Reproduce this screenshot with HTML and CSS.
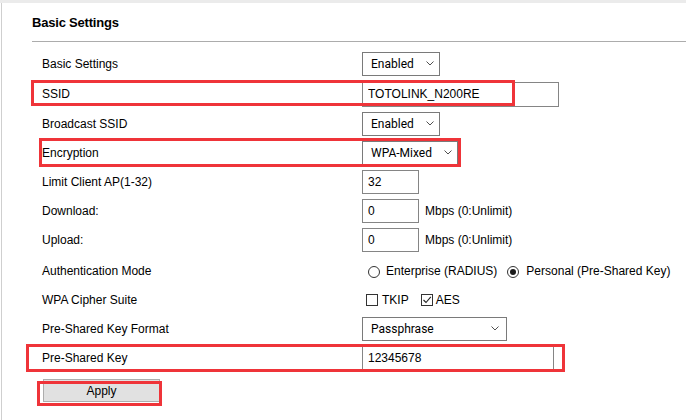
FILE: index.html
```html
<!DOCTYPE html>
<html>
<head>
<meta charset="utf-8">
<title>Basic Settings</title>
<link rel="stylesheet" href="styles.css">
</head>
<body>
<div class="page">
  <div class="topbar"></div>
  <div class="panel">
    <div class="title">Basic Settings</div>
    <div class="form">
      <div class="label">Basic Settings</div>
      <div class="field">
        <div class="select w-enabled"><span>Enabled</span><svg class="chev" width="8" height="5" viewBox="0 0 8 5"><polyline points="0.5,0.5 4,4 7.5,0.5"/></svg></div>
      </div>

      <div class="label">SSID</div>
      <div class="field"><input class="text w-ssid" type="text" value="TOTOLINK_N200RE" readonly></div>

      <div class="label">Broadcast SSID</div>
      <div class="field">
        <div class="select w-enabled"><span>Enabled</span><svg class="chev" width="8" height="5" viewBox="0 0 8 5"><polyline points="0.5,0.5 4,4 7.5,0.5"/></svg></div>
      </div>

      <div class="label">Encryption</div>
      <div class="field">
        <div class="select w-enc"><span>WPA-Mixed</span><svg class="chev" width="8" height="5" viewBox="0 0 8 5"><polyline points="0.5,0.5 4,4 7.5,0.5"/></svg></div>
      </div>

      <div class="label">Limit Client AP(1-32)</div>
      <div class="field"><input class="text w-small" type="text" value="32" readonly></div>

      <div class="label">Download:</div>
      <div class="field"><input class="text w-small" type="text" value="0" readonly><span class="unit">Mbps (0:Unlimit)</span></div>

      <div class="label">Upload:</div>
      <div class="field"><input class="text w-small" type="text" value="0" readonly><span class="unit">Mbps (0:Unlimit)</span></div>

      <div class="label">Authentication Mode</div>
      <div class="field">
        <span class="radio"></span><span class="opt">Enterprise (RADIUS)</span>
        <span class="radio on"></span><span class="opt">Personal (Pre-Shared Key)</span>
      </div>

      <div class="label">WPA Cipher Suite</div>
      <div class="field">
        <span class="check"></span><span class="copt">TKIP</span>
        <span class="check on"><svg width="10" height="10" viewBox="0 0 10 10"><polyline points="1.5,5 4,7.5 8.8,1.8"/></svg></span><span class="copt">AES</span>
      </div>

      <div class="label">Pre-Shared Key Format</div>
      <div class="field">
        <div class="select w-fmt"><span>Passphrase</span><svg class="chev" width="8" height="5" viewBox="0 0 8 5"><polyline points="0.5,0.5 4,4 7.5,0.5"/></svg></div>
      </div>

      <div class="label">Pre-Shared Key</div>
      <div class="field"><input class="text w-psk" type="text" value="12345678" readonly></div>
    </div>
    <div class="actions"><button class="btn" type="button">Apply</button></div>
  </div>

  <div class="mark mark-ssid"></div>
  <div class="mark mark-enc"></div>
  <div class="mark mark-psk"></div>
  <div class="mark mark-apply"></div>
</div>
</body>
</html>
```

FILE: styles.css
```css
html, body {
  margin: 0;
  padding: 0;
  background: #ffffff;
}

body {
  font-family: "Liberation Sans", Arial, sans-serif;
  font-size: 12px;
  color: #000;
}

.page {
  position: relative;
  width: 686px;
  height: 420px;
  overflow: hidden;
}

.topbar {
  height: 3px;
  background: #ebebeb;
}

.panel {
  margin-left: 1px;
  border-left: 1px solid #cfcfcf;
  padding-left: 30px;
  height: 417px;
  box-sizing: border-box;
}

.title {
  padding: 12px 0 10px;
  line-height: 16px;
  font-size: 13px;
  font-weight: bold;
  letter-spacing: -0.2px;
  border-bottom: 1px solid #acacac;
}

.form {
  margin-top: 6px;
  padding-left: 10px;
  display: grid;
  grid-template-columns: 320px auto;
  grid-template-rows: 31px 30px 29px 29px 30px 28px 30px 31px 27px 31px 27px;
  align-items: center;
}

.label {
  line-height: 14px;
  white-space: nowrap;
}

.field {
  display: flex;
  align-items: center;
  white-space: nowrap;
}

.select {
  box-sizing: border-box;
  height: 24px;
  border: 1px solid #7a7a7a;
  background: #fff;
  display: flex;
  align-items: center;
  justify-content: space-between;
  padding: 0 5px 0 8px;
  font-family: Roboto, "Liberation Sans", sans-serif;
  font-size: 12px;
  color: #000;
}

.w-enabled { width: 78px; }
.w-enc { width: 96px; }
.w-fmt { width: 145px; padding-right: 7px; }

.chev polyline {
  fill: none;
  stroke: #505050;
  stroke-width: 1;
}

.text {
  box-sizing: border-box;
  height: 24px;
  margin: 0;
  border: 1px solid #858585;
  border-radius: 0;
  padding: 0 5px;
  font-family: "Liberation Sans", Arial, sans-serif;
  font-size: 12px;
  color: #000;
  background: #fff;
  outline: none;
}

.w-ssid { width: 197px; height: 25px; }
.w-small { width: 57px; }
.w-psk { width: 192px; }

.unit {
  margin-left: 6px;
}

.radio {
  box-sizing: border-box;
  width: 12px;
  height: 12px;
  border: 1px solid #333;
  border-radius: 50%;
  margin-left: 6px;
  margin-right: 6px;
  display: inline-flex;
  align-items: center;
  justify-content: center;
  background: #fff;
  position: relative;
  top: 1px;
}

.radio.on::after {
  content: "";
  width: 6px;
  height: 6px;
  border-radius: 50%;
  background: #1a1a1a;
}

.radio.on {
  margin-left: 10px;
  margin-right: 7px;
}

.check {
  box-sizing: border-box;
  width: 12px;
  height: 12px;
  border: 1px solid #333;
  margin-left: 4px;
  margin-right: 4px;
  display: inline-flex;
  align-items: center;
  justify-content: center;
  background: #fff;
}

.check.on {
  margin-left: 12px;
  margin-right: 3px;
}

.check svg polyline {
  fill: none;
  stroke: #222;
  stroke-width: 1.1;
}

.actions {
  margin-top: 8px;
  padding-left: 11px;
}

.btn {
  box-sizing: border-box;
  width: 117px;
  height: 23px;
  margin: 0;
  padding: 0;
  border: 1px solid #adadad;
  border-radius: 0;
  background: #e1e1e1;
  font-family: "Liberation Sans", Arial, sans-serif;
  font-size: 12px;
  color: #000;
}

.mark {
  position: absolute;
  box-sizing: border-box;
  border: 3px solid #ef3439;
}

.mark-ssid { left: 31px; top: 80px; width: 484px; height: 26px; }
.mark-enc { left: 39px; top: 138px; width: 422px; height: 29px; }
.mark-psk { left: 26px; top: 344px; width: 539px; height: 28px; }
.mark-apply { left: 37px; top: 381px; width: 125px; height: 25px; }
```
